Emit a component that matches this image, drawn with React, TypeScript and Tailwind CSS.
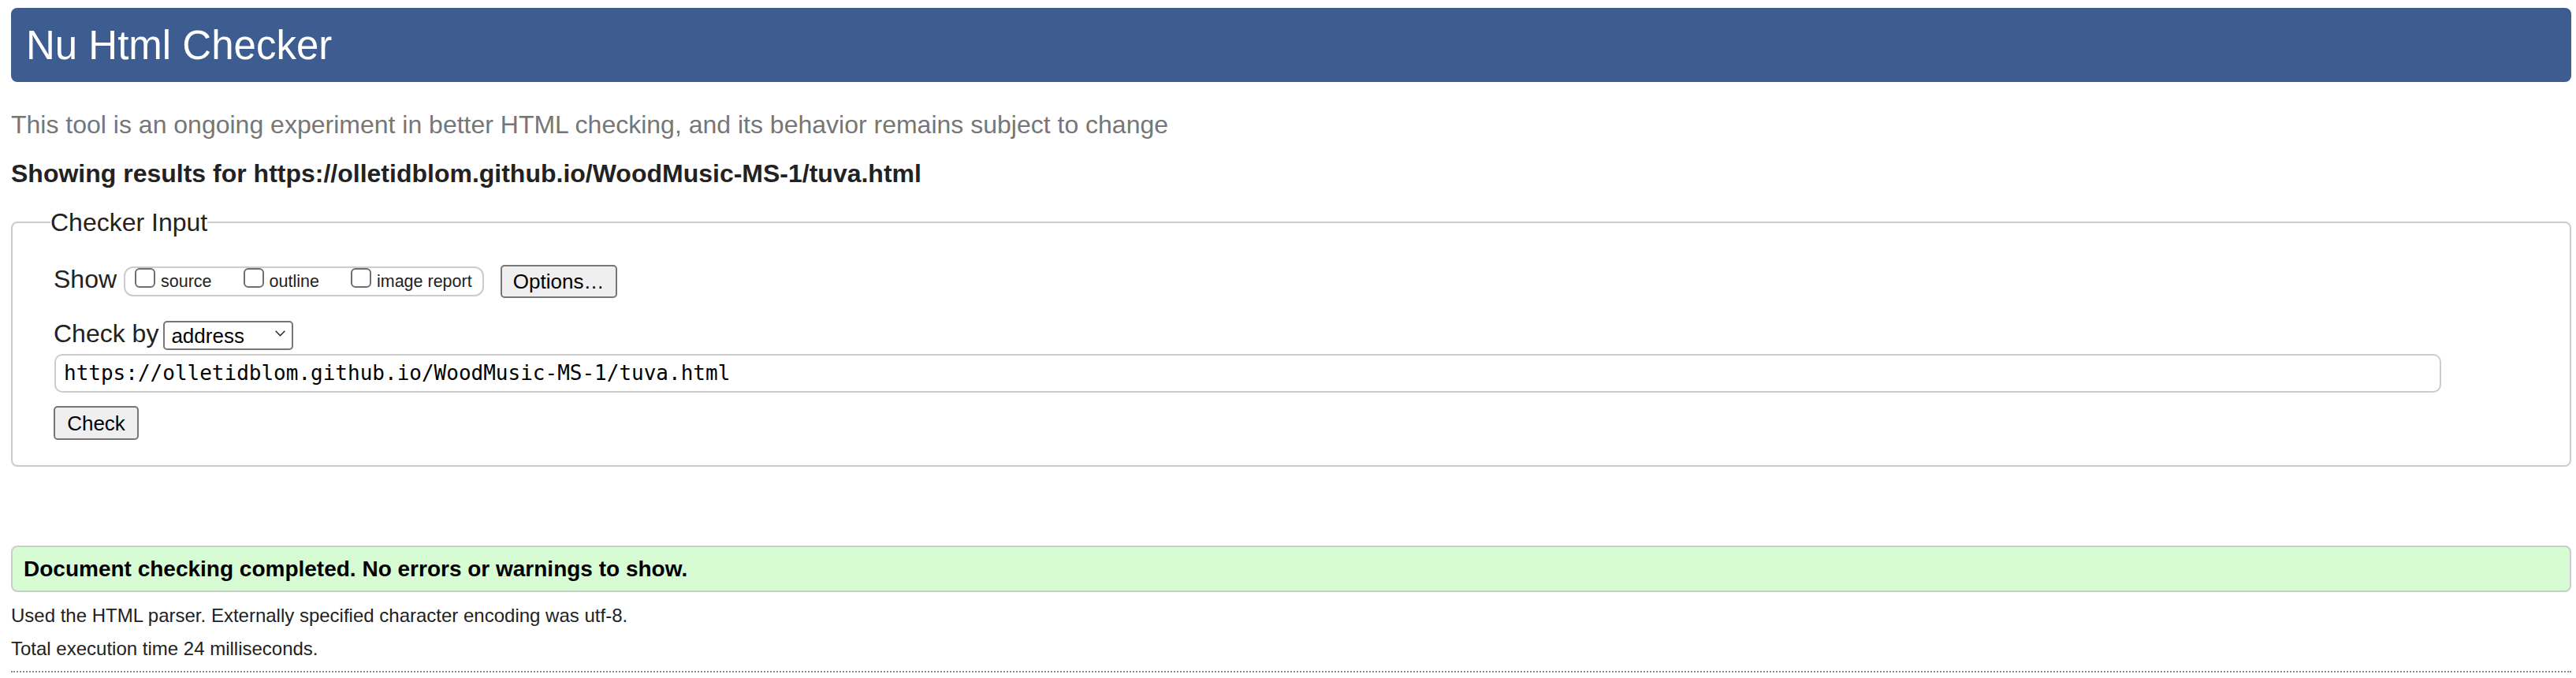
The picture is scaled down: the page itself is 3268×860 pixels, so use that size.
// App.tsx

import React from "react";

const showOptions = ["source", "outline", "image report"];

const Checkbox = ({ label }: { label: string }) => (
  <label className="flex items-start gap-[7px]">
    <span className="h-[25px] w-[26px] rounded-[6px] border-2 border-[#6e6e6e] bg-white"></span>
    <span className="text-[21.5px] leading-[35px]">{label}</span>
  </label>
);

const App = () => {
  return (
    <div className="min-h-screen bg-white pl-[14px] pr-[6px] pt-[10px] font-['Liberation_Sans',Arial,sans-serif] text-[#222]">
      {/* Title bar */}
      <header className="flex h-[94px] items-center rounded-[8px] bg-[#3d5c8f] pl-[19px]">
        <h1 className="text-[51px] leading-none text-white">Nu Html Checker</h1>
      </header>

      <p className="mt-[36px] text-[32px] leading-[36px] text-[#767676]">
        This tool is an ongoing experiment in better HTML checking, and its behavior remains subject to change
      </p>
      <h2 className="mt-[26px] text-[32px] font-bold leading-[36px] text-[#222]">
        Showing results for https://olletidblom.github.io/WoodMusic-MS-1/tuva.html
      </h2>

      {/* Checker input form */}
      <fieldset className="mt-[26px] rounded-[8px] border-2 border-[#ccc] pb-[32px] pl-[48px] pt-[36px]">
        <legend className="text-[32px] leading-[36px]">Checker Input</legend>
        <div className="pl-[4px]">
          <div className="flex items-start">
            <span className="text-[32px] leading-[36px]">Show</span>
            <div className="ml-[9px] mt-[2px] flex h-[38px] items-start gap-[40px] rounded-[12px] border-2 border-[#ccc] pl-[12px] pr-[13px]">
              {showOptions.map((opt) => (
                <Checkbox key={opt} label={opt} />
              ))}
            </div>
            <button className="ml-[21px] h-[42px] w-[148px] rounded-[5px] border-2 border-[#767676] bg-[#efefef] text-[26px] leading-none text-black">
              Options…
            </button>
          </div>

          <div className="mt-[27px] flex items-start">
            <span className="text-[32px] leading-[36px]">Check by</span>
            <div className="ml-[6px] mt-[2px] flex h-[37px] w-[165px] items-center justify-between rounded-[5px] border-2 border-[#767676] bg-white pl-[8px] pr-[8px]">
              <span className="text-[26px] leading-[30px] text-black">address</span>
              <svg width="13" height="8" viewBox="0 0 13 8" className="-mt-[6px]">
                <polyline points="0.7,0.7 6.5,6.8 12.3,0.7" fill="none" stroke="#222" strokeWidth="1.4" />
              </svg>
            </div>
          </div>

          <div className="ml-[1px] mt-[5px] flex h-[49px] w-[3028px] items-center rounded-[10px] border-2 border-[#ccc] pl-[10px] font-['DejaVu_Sans_Mono',monospace] text-[26px] text-black">
            https://olletidblom.github.io/WoodMusic-MS-1/tuva.html
          </div>

          <button className="mt-[17px] h-[43px] w-[108px] rounded-[5px] border-2 border-[#767676] bg-[#efefef] text-[26px] leading-none text-black">
            Check
          </button>
        </div>
      </fieldset>

      {/* Result */}
      <div className="mt-[100px] flex h-[59px] items-center rounded-[8px] border-2 border-[#ccc] bg-[#d7fcd3] pl-[14px]">
        <p className="text-[28px] font-bold leading-none text-black">
          Document checking completed. No errors or warnings to show.
        </p>
      </div>

      <p className="mt-[9px] text-[24px] leading-[42px]">
        Used the HTML parser. Externally specified character encoding was utf-8.
      </p>
      <p className="text-[24px] leading-[42px]">Total execution time 24 milliseconds.</p>

      <hr className="mt-[7px] border-0 border-t-2 border-dotted border-[#8a8a8a]" />
    </div>
  );
};

export default App;
